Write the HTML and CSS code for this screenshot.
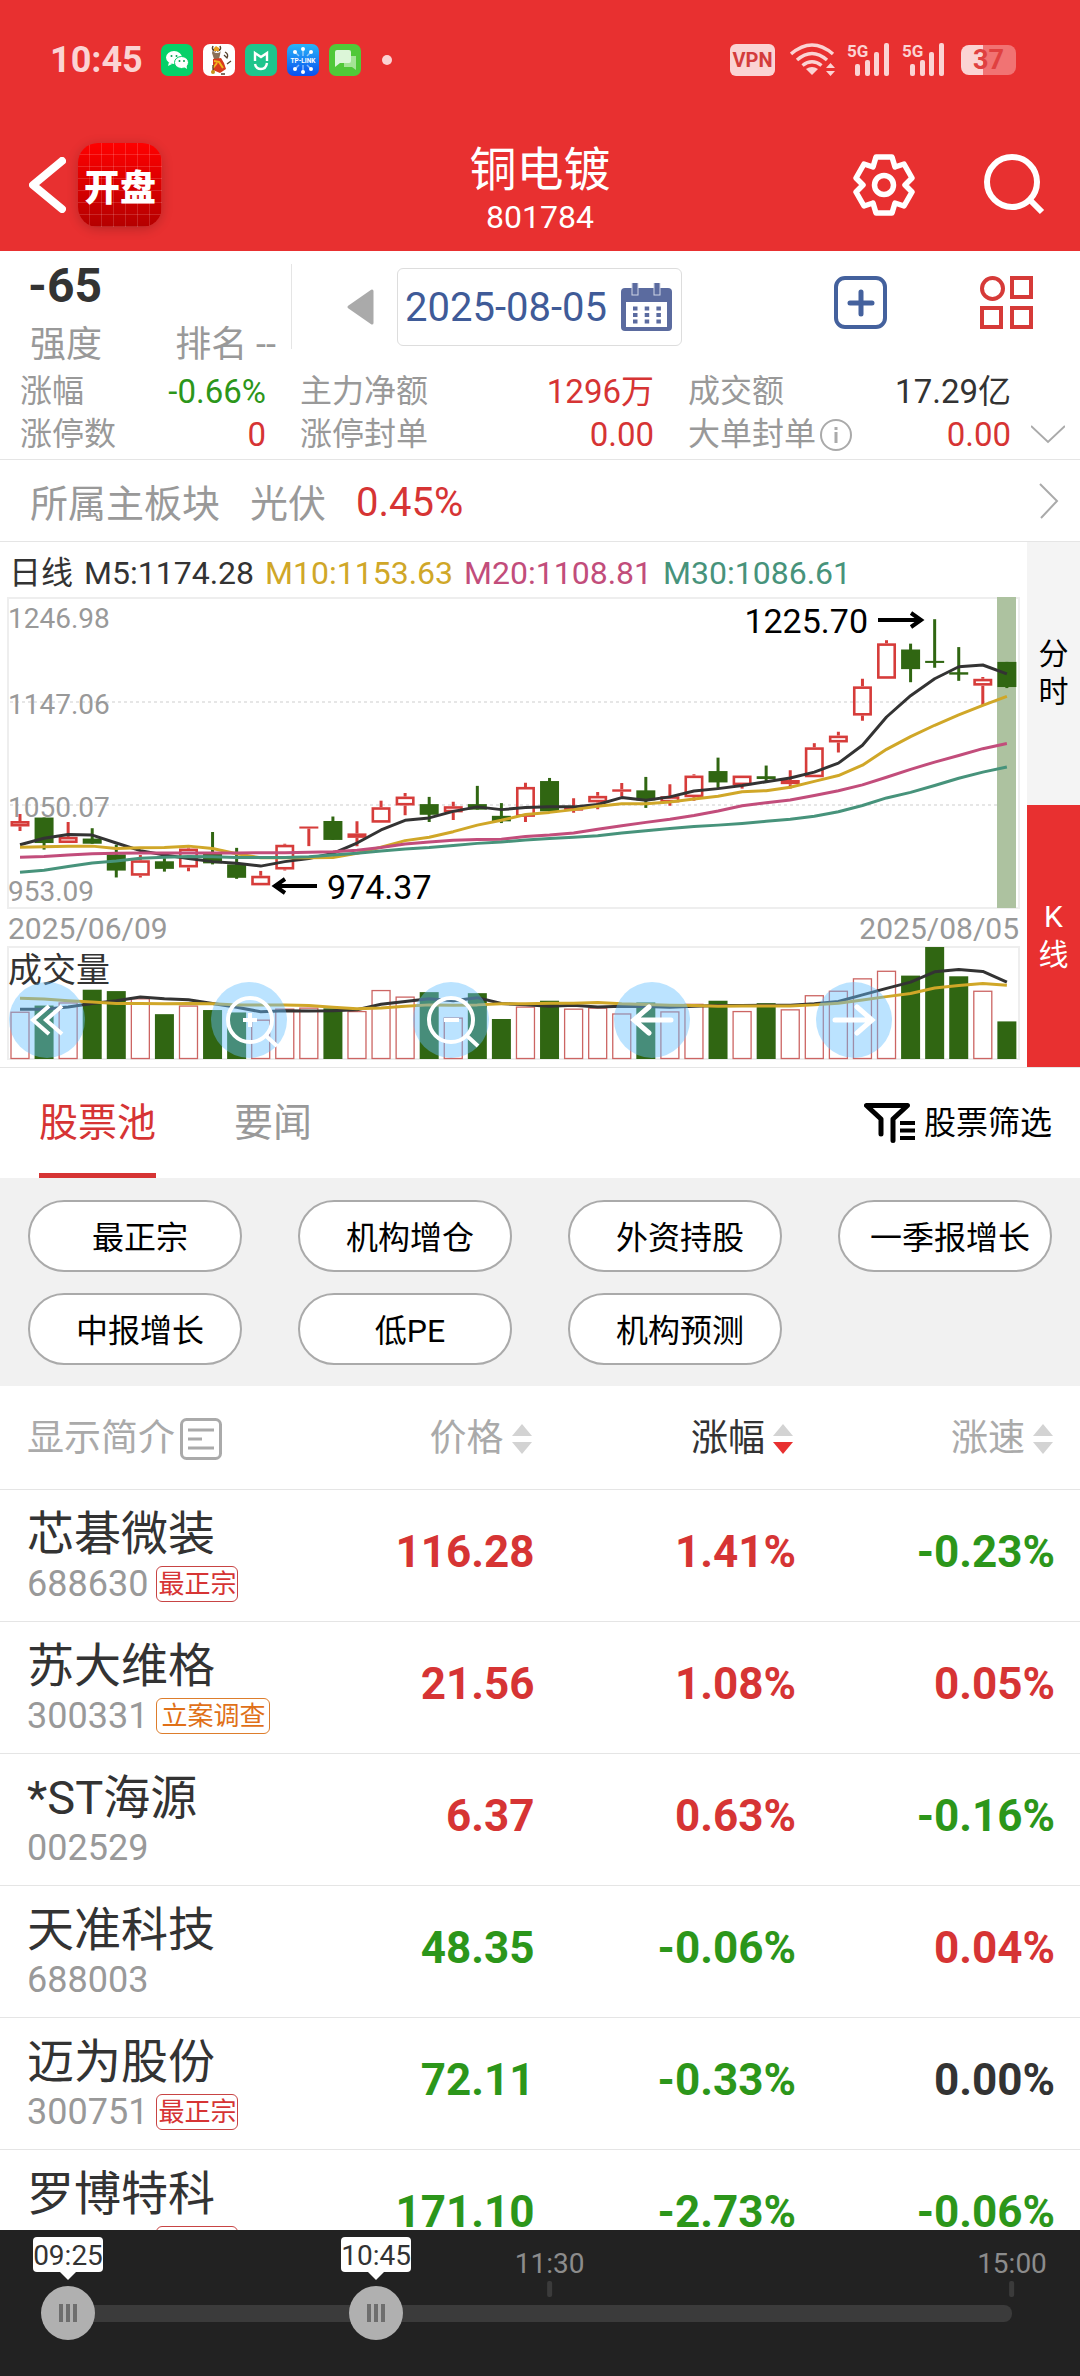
FILE: index.html
```html
<!DOCTYPE html>
<html lang="zh-CN">
<head>
<meta charset="utf-8">
<meta name="viewport" content="width=device-width">
<title>铜电镀 801784</title>
<link rel="stylesheet" href="styles.css">
</head>
<body>
<header class="top">
  <div class="status">
    <span class="clock">10:45</span>
    <svg class="app" viewBox="0 0 32 32"><rect width="32" height="32" rx="7" fill="#06d068"/><ellipse cx="13" cy="13.500" rx="8" ry="6.500" fill="#fff"/><path d="M8 18l-1 4 4-2z" fill="#fff"/><ellipse cx="20.500" cy="18.500" rx="7" ry="6" fill="#fff" stroke="#06d068"/><path d="M23 23l3 2-.5-4z" fill="#fff"/><g fill="#06a050"><circle cx="10.500" cy="12" r="1"/><circle cx="15.500" cy="12" r="1"/><circle cx="18.500" cy="17" r="1"/><circle cx="23" cy="17" r="1"/></g></svg>
    <svg class="app" viewBox="0 0 32 32"><rect width="32" height="32" rx="7" fill="#fff"/><path d="M10 5q0 4 4 4t4-4l-1 6-1 4h-5l-2-6z" fill="#8a7058"/><path d="M10 2q-2 4 3 5M17 2q2 4-3 5" fill="none" stroke="#54402c" stroke-width="1.500"/><path d="M11 4l2-2 3 2v3h-5z" fill="#e8a020"/><path d="M10 15l8-1 3 5 2 6-6 4-7-3z" fill="#d83a1c"/><path d="M11 17l5 1 4 6M10 24l4-5" fill="none" stroke="#f2b51e" stroke-width="2"/><path d="M22 8q4 2 2 6l-3-3M24 20l4-3M10 29V21M18 30h4" fill="none" stroke="#54402c" stroke-width="1.300"/><circle cx="10" cy="28" r="2" fill="#c89018"/></svg>
    <svg class="app" viewBox="0 0 32 32"><rect width="32" height="32" rx="7" fill="#1ec58c"/><path d="M10 17V9l6 4 6-4v8M10 20q1 5 6 5t6-6" fill="none" stroke="#fff" stroke-width="2.400"/></svg>
    <svg class="app" viewBox="0 0 32 32"><defs><linearGradient id="tp" x2="0" y2="1"><stop stop-color="#28b4f8"/><stop offset="1" stop-color="#0850f0"/></linearGradient></defs><rect width="32" height="32" rx="7" fill="url(#tp)"/><g fill="#fff"><circle cx="16" cy="5" r="2"/><circle cx="8" cy="8" r="2"/><circle cx="24" cy="8" r="2"/><circle cx="16" cy="28" r="2"/><circle cx="8" cy="25" r="2"/><circle cx="24" cy="25" r="2"/></g><path d="M16 5v7M8 8l4 4M24 8l-4 4M16 27v-6M8 25l4-4M24 25l-4-4" stroke="#fff" stroke-opacity=".5" stroke-width="1.500"/><text x="16" y="18.500" font-size="6.500" font-weight="700" text-anchor="middle" fill="#fff">TP-LINK</text></svg>
    <svg class="app" viewBox="0 0 32 32"><rect width="32" height="32" rx="7" fill="#50c838"/><path d="M15 12h12v14l-4-3h-8z" fill="#a4e496"/><path d="M8 6h12q2 0 2 2v9q0 2-2 2h-9l-5 4V8q0-2 2-2z" fill="#dcf6d8"/></svg>
    <span class="more"></span>
    <span class="vpn">VPN</span>
    <svg class="wifi" viewBox="0 0 46 33" fill="none" stroke="#fbd3d3" stroke-width="3.500"><path d="M1 11Q22-7 43 11M7 17Q22 4 37 17M12.500 22.500Q22 15 31.500 22.500"/><path d="M16 26q6-4 12 0l-6 6z" fill="#fbd3d3" stroke="none"/><path d="M36 25l4.500-5 4.500 5zM36 28h9l-4.500 5z" fill="#fbd3d3" stroke="none"/></svg>
    <svg class="signal" viewBox="0 0 43 33" fill="#fbd3d3"><text x="0" y="14" font-size="17" font-weight="700">5G</text><rect x="8" y="21" width="5" height="12" rx="2"/><rect x="18" y="17" width="5" height="16" rx="2"/><rect x="27" y="9" width="5" height="24" rx="2"/><rect x="37" y="0" width="5" height="33" rx="2"/></svg>
    <svg class="signal" viewBox="0 0 43 33" fill="#fbd3d3"><text x="0" y="14" font-size="17" font-weight="700">5G</text><rect x="8" y="21" width="5" height="12" rx="2"/><rect x="18" y="17" width="5" height="16" rx="2"/><rect x="27" y="9" width="5" height="24" rx="2"/><rect x="37" y="0" width="5" height="33" rx="2"/></svg>
    <span class="battery">37</span>
  </div>
  <nav class="nav">
    <div class="nav-left">
      <button class="icon-btn" aria-label="返回"><svg width="37" height="56" viewBox="0 0 37 56" fill="none" stroke="#fff" stroke-width="8" stroke-linecap="round" stroke-linejoin="round"><path d="M33 4L4 28l29 24"/></svg></button>
      <span class="logo">开盘</span>
    </div>
    <div class="title"><h1>铜电镀</h1><p>801784</p></div>
    <div class="nav-right">
      <button class="icon-btn" aria-label="设置"><svg width="62" height="62" viewBox="-31 -31 62 62" fill="none" stroke="#fff" stroke-width="5.500" stroke-linejoin="round"><path d="M-8-28H8L11-18 20-21 28-7 21 0 28 7 20 21 11 18 8 28H-8L-11 18-20 21-28 7-21 0-28-7-20-21-11-18z"/><circle r="9.500"/></svg></button>
      <button class="icon-btn" aria-label="搜索"><svg width="62" height="62" viewBox="0 0 62 62" fill="none" stroke="#fff" stroke-width="6"><circle cx="29" cy="28" r="25"/><path d="M47 46l12 12"/></svg></button>
    </div>
  </nav>
</header>

<section class="overview">
  <div class="score"><strong>-65</strong><div class="rank"><span>强度</span><span>排名 --</span></div></div>
  <span class="rule"></span>
  <button class="icon-btn prev" aria-label="前一天"><svg width="27" height="36" viewBox="0 0 27 36"><path d="M25 2v32L2 18z" fill="#aaa" stroke="#aaa" stroke-width="3" stroke-linejoin="round"/></svg></button>
  <button class="date">2025-08-05
    <svg width="51" height="48" viewBox="0 0 51 48"><rect y="5" width="51" height="43" rx="4" fill="#5b6b9f"/><rect x="5" y="19" width="41" height="25" fill="#fff"/><g fill="#5b6b9f" stroke="#cfd5e6"><rect x="11" y="-1" width="6" height="13"/><rect x="33" y="-1" width="6" height="13"/></g><path d="M12 25.500h30M12 32h30M12 38.500h30" stroke="#5b6b9f" stroke-width="4" stroke-dasharray="4.500 7.200"/></svg>
  </button>
  <div class="tools">
    <button class="icon-btn" aria-label="添加自选"><svg width="53" height="53" viewBox="0 0 53 53" fill="none" stroke="#44619d" stroke-width="4"><rect x="2" y="2" width="49" height="49" rx="9"/><path d="M27 16v22M16 27h22" stroke-width="5" stroke-linecap="round"/></svg></button>
    <button class="icon-btn" aria-label="更多功能"><svg width="53" height="53" viewBox="0 0 53 53" fill="none" stroke="#d63a38" stroke-width="4"><circle cx="12.500" cy="12.500" r="10.500"/><rect x="32" y="2" width="19" height="19"/><rect x="2" y="32" width="19" height="19"/><rect x="32" y="32" width="19" height="19"/></svg></button>
  </div>
</section>

<section class="metrics">
  <dl>
    <div><dt>涨幅</dt><dd class="down">-0.66%</dd></div>
    <div><dt>主力净额</dt><dd class="up">1296万</dd></div>
    <div><dt>成交额</dt><dd>17.29亿</dd></div>
    <div><dt>涨停数</dt><dd class="up">0</dd></div>
    <div><dt>涨停封单</dt><dd class="up">0.00</dd></div>
    <div><dt>大单封单<svg width="32" height="32" viewBox="0 0 32 32" fill="none" stroke="#aaa" stroke-width="2"><circle cx="16" cy="16" r="15"/><path d="M16 13v11M16 8v3" stroke-width="3"/></svg></dt><dd class="up">0.00</dd></div>
  </dl>
  <button class="icon-btn expand" aria-label="展开"><svg width="34" height="20" viewBox="0 0 34 20" fill="none" stroke="#aaa" stroke-width="2"><path d="M0 2l17 16L34 2"/></svg></button>
</section>

<a class="board" href="#board"><span>所属主板块</span><span>光伏</span><b>0.45%</b>
  <svg width="22" height="36" viewBox="0 0 22 36" fill="none" stroke="#aaa" stroke-width="2"><path d="M2 1l17 17L3 35"/></svg>
</a>

<section class="chart">
  <div class="plot">
    <div class="legend"><span>日线</span><span>M5:1174.28</span><span class="m10">M10:1153.63</span><span class="m20">M20:1108.81</span><span class="m30">M30:1086.61</span></div>
    <svg id="kline" viewBox="0 0 1027 470" role="img" aria-label="日K线图"></svg>
    <div class="controls">
      <button aria-label="向左翻页"><svg viewBox="0 0 76 76"><path d="M40 24L24 38l16 14M53 24L37 38l16 14"/></svg></button>
      <button aria-label="放大"><svg viewBox="0 0 76 76"><circle cx="39" cy="38" r="22"/><path d="M54 53l12 11M39 31v14M32 38h14"/></svg></button>
      <button aria-label="缩小"><svg viewBox="0 0 76 76"><circle cx="38" cy="38" r="22"/><path d="M53 53l12 11M31 38h15"/></svg></button>
      <button aria-label="左移"><svg viewBox="0 0 76 76"><path class="bold" d="M35 25L20 38l15 13M20 38h37"/></svg></button>
      <button aria-label="右移"><svg viewBox="0 0 76 76"><path class="bold" d="M41 25l15 13-15 13M56 38H19"/></svg></button>
    </div>
  </div>
  <div class="modes"><button>分<br>时</button><button class="on">K<br>线</button></div>
</section>

<nav class="tabs">
  <a class="active" href="#pool">股票池</a><a href="#news">要闻</a>
  <button class="filter"><svg width="51" height="40" viewBox="0 0 51 40" fill="none" stroke="#000" stroke-width="5" stroke-linecap="round" stroke-linejoin="round"><path d="M17 31V16L2.500 2.500h41L29 16v21.500"/><path d="M36 20h15M36 27.500h15M36 35h15" stroke-width="4" stroke-linecap="butt"/></svg>股票筛选</button>
</nav>

<div class="chips">
  <button>最正宗</button><button>机构增仓</button><button>外资持股</button><button>一季报增长</button>
  <button>中报增长</button><button>低PE</button><button>机构预测</button>
</div>

<main class="list">
<table>
  <colgroup><col class="c-name"><col class="c-price"><col class="c-change"><col></colgroup>
  <thead><tr>
    <th><button>显示简介<svg class="doc" width="42" height="42" viewBox="0 0 42 42" fill="none" stroke="#aaa" stroke-width="3"><rect x="1.500" y="1.500" width="39" height="39" rx="5"/><path d="M8 12h26M8 21h14M8 30h26"/></svg></button></th>
    <th><button>价格<svg class="sort" viewBox="0 0 20 30"><path d="M10 0l10 12H0z"/><path d="M0 18h20L10 30z"/></svg></button></th>
    <th><button class="sorted">涨幅<svg class="sort" viewBox="0 0 20 30"><path d="M10 0l10 12H0z"/><path class="desc" d="M0 18h20L10 30z"/></svg></button></th>
    <th><button>涨速<svg class="sort" viewBox="0 0 20 30"><path d="M10 0l10 12H0z"/><path d="M0 18h20L10 30z"/></svg></button></th>
  </tr></thead>
  <tbody>
    <tr><td><div class="name">芯碁微装</div><div class="code">688630<span class="tag">最正宗</span></div></td><td class="up">116.28</td><td class="up">1.41%</td><td class="down">-0.23%</td></tr>
    <tr><td><div class="name">苏大维格</div><div class="code">300331<span class="tag case">立案调查</span></div></td><td class="up">21.56</td><td class="up">1.08%</td><td class="up">0.05%</td></tr>
    <tr><td><div class="name">*ST海源</div><div class="code">002529</div></td><td class="up">6.37</td><td class="up">0.63%</td><td class="down">-0.16%</td></tr>
    <tr><td><div class="name">天准科技</div><div class="code">688003</div></td><td class="down">48.35</td><td class="down">-0.06%</td><td class="up">0.04%</td></tr>
    <tr><td><div class="name">迈为股份</div><div class="code">300751<span class="tag">最正宗</span></div></td><td class="down">72.11</td><td class="down">-0.33%</td><td>0.00%</td></tr>
    <tr><td><div class="name">罗博特科</div><div class="code">300757<span class="tag">最正宗</span></div></td><td class="down">171.10</td><td class="down">-2.73%</td><td class="down">-0.06%</td></tr>
  </tbody>
</table>
</main>

<footer class="timeline">
  <div class="scale">
    <span class="mark" style="left:51.02%">11:30</span>
    <span class="mark" style="left:100%">15:00</span>
    <label class="bubble" for="from" style="left:0%">09:25</label>
    <label class="bubble" for="to" style="left:32.65%">10:45</label>
    <div class="track"></div>
    <input id="from" type="range" min="0" max="245" value="0">
    <input id="to" type="range" min="0" max="245" value="80">
  </div>
</footer>
<script src="chart.js"></script>
</body>
</html>
```
FILE: styles.css
```css
* { box-sizing: border-box; margin: 0; padding: 0; }
body {
  height: 100vh;
  display: flex;
  flex-direction: column;
  overflow: hidden;
  background: #fff;
  color: #333;
  font-family: Roboto, "Noto Sans CJK SC", sans-serif;
  font-size: 32px;
}
body > * { flex: none; }
button { background: none; border: 0; font: inherit; color: inherit; cursor: pointer; }
a { color: inherit; text-decoration: none; }
svg { display: block; flex: none; }
.icon-btn { display: flex; }
.up { color: #d63434; }
.down { color: #2c961a; }

/* header */
.top { background: #e83030; color: #fff; }
.status { display: flex; align-items: center; height: 119px; padding: 0 64px 0 50px; color: #fbd3d3; }
.clock { font-size: 36px; font-weight: 700; width: 111px; }
.app { width: 32px; height: 32px; margin-right: 10px; }
.more { width: 10px; height: 10px; border-radius: 5px; background: currentColor; margin-left: 11px; }
.vpn { margin-left: auto; width: 45px; height: 32px; border-radius: 6px; background: #fbd3d3; color: #d33c3c; font-size: 20px; font-weight: 700; line-height: 33px; text-align: center; }
.wifi { width: 46px; height: 33px; margin: 0 11px 0 15px; }
.signal { width: 43px; height: 33px; margin-right: 12px; overflow: visible; }
.battery { width: 55px; height: 30px; margin-left: 4px; border-radius: 8px; background: linear-gradient(90deg, #fbd3d3 40%, #f17373 40%); color: #e04040; font-size: 27px; font-weight: 700; line-height: 31px; text-align: center; }
.nav { display: grid; grid-template-columns: 1fr auto 1fr; align-items: center; height: 132px; }
.nav-left { display: flex; align-items: center; gap: 12px; padding-left: 29px; }
.logo {
  width: 84px; height: 84px; border-radius: 20px;
  display: flex; align-items: center; justify-content: center;
  font-size: 36px; font-weight: 900;
  background:
    repeating-linear-gradient(90deg, transparent 0 11px, #ffffff26 11px 12px),
    repeating-linear-gradient(transparent 0 11px, #ffffff26 11px 12px),
    linear-gradient(#ff0000, #b40000);
  box-shadow: 0 2px 12px #0003;
}
.title { text-align: center; padding-top: 8px; }
.title h1 { font-size: 47px; font-weight: 400; line-height: 56px; }
.title p { font-size: 32px; line-height: 38px; }
.nav-right { display: flex; justify-content: flex-end; gap: 68px; padding-right: 35px; }

/* score and date */
.overview { display: flex; align-items: center; height: 118px; padding-right: 47px; }
.score { width: 291px; padding: 4px 15px 0 28px; }
.score strong { display: block; font-size: 48px; line-height: 48px; }
.rank { display: flex; justify-content: space-between; margin-top: 17px; font-size: 36px; line-height: 36px; color: #999; padding-left: 2px; }
.rule { width: 1px; height: 85px; background: #e5e5e5; margin-bottom: 8px; }
.prev { margin-left: 55px; margin-bottom: 6px; }
.date { display: flex; align-items: center; gap: 14px; width: 285px; height: 78px; margin: 0 0 6px 23px; padding-left: 7px; border: 1px solid #ddd; border-radius: 6px; color: #3f5b98; font-size: 40px; }
.tools { display: flex; gap: 93px; margin: 0 0 15px auto; }

.metrics { display: flex; align-items: flex-end; padding: 1px 15px 3px 20px; border-bottom: 1px solid #e5e5e5; }
.metrics dl { flex: 1; display: grid; grid-template-columns: 246fr 354fr 323fr; column-gap: 34px; line-height: 43px; }
.metrics dl div { display: flex; justify-content: space-between; }
.metrics dt { display: flex; align-items: center; gap: 4px; color: #999; }
.metrics dd { font-size: 33px; }
.expand { margin: 0 0 12px 20px; }

.board { display: flex; align-items: center; gap: 30px; height: 82px; padding: 0 20px 0 30px; border-bottom: 1px solid #e5e5e5; font-size: 38px; color: #999; }
.board b { padding-top: 4px; font-size: 40px; font-weight: 400; color: #d63434; }
.board svg { margin-left: auto; }

/* chart */
.chart { display: flex; border-bottom: 1px solid #e5e5e5; }
.plot { position: relative; flex: 1; }
.legend { display: flex; gap: 11px; padding: 8px 0 0 9px; line-height: 47px; white-space: nowrap; }
.m10 { color: #d0a728; }
.m20 { color: #c24d7b; }
.m30 { color: #47937b; }
#kline { width: 100%; height: auto; }
#kline .frame { fill: none; stroke: #eee; stroke-width: 2; }
#kline .grid { stroke: #e6e6e6; stroke-width: 2; stroke-dasharray: 3 3; }
#kline .axis { fill: #999; font-size: 28px; }
#kline .day { fill: #999; font-size: 30px; }
#kline .note { fill: #000; font-size: 34px; }
#kline .label { fill: #333; font-size: 34px; }
#kline .arrow { fill: none; stroke: #000; stroke-width: 4; }
#kline .line { fill: none; stroke-width: 3; stroke-linejoin: round; }
.controls { position: absolute; left: 9px; right: 135px; bottom: 9px; display: flex; justify-content: space-between; }
.controls button { width: 76px; height: 76px; border-radius: 38px; background: #64bfff70; }
.controls svg { fill: none; stroke: #fff; stroke-width: 4; }
.controls .bold { stroke-width: 5; stroke-linecap: round; }
.modes { width: 53px; display: flex; flex-direction: column; line-height: 38px; font-size: 30px; }
.modes button { flex: 1; background: #f4f4f4; color: #000; }
.modes .on { background: #e83030; color: #fff; }

/* tabs and chips */
.tabs { display: flex; height: 110px; padding: 0 28px 0 39px; gap: 78px; font-size: 39px; line-height: 111px; color: #999; }
.tabs .active { color: #d63434; border-bottom: 5px solid #d63434; }
.filter { display: flex; align-items: center; gap: 9px; margin-left: auto; font-size: 32px; line-height: 40px; color: #000; }
.chips { display: grid; grid-template-columns: repeat(4, 1fr); gap: 21px 56px; padding: 22px 28px 21px; background: #f1f1f1; }
.chips button { height: 72px; padding: 0 0 2px 10px; border: 2px solid #aaa; border-radius: 36px; background: #fff; color: #000; white-space: nowrap; }

/* stock list */
body > .list { flex: 1 1 0; min-height: 0; overflow: hidden; }
table { width: 100%; table-layout: fixed; border-collapse: collapse; }
.c-name { width: 26%; }
.c-price { width: 23.5%; }
.c-change { width: 24.2%; }
tr { border-bottom: 1px solid #e5e5e5; }
th { height: 103px; font-size: 37px; font-weight: 400; color: #aaa; }
th button { display: flex; align-items: center; gap: 8px; margin: 0 3px 0 auto; padding-top: 4px; line-height: 44px; }
th:first-child button { margin: 0 0 0 27px; gap: 5px; }
th:last-child button { margin-right: 27px; }
.sorted { color: #333; }
.sort { width: 20px; height: 30px; fill: #d3d3d3; }
.sort .desc { fill: #e83030; }
td { height: 132px; text-align: right; font-size: 44px; font-weight: 700; padding-bottom: 6px; }
td:first-child { text-align: left; font-weight: 400; padding: 0 0 0 27px; white-space: nowrap; }
td:last-child { padding-right: 25px; }
.name { font-size: 47px; line-height: 52px; }
.code { display: flex; align-items: center; gap: 8px; height: 38px; margin-top: 5px; font-size: 36px; color: #999; }
.tag { height: 36px; padding: 0 1px; border: 1px solid #c84444; border-radius: 6px; color: #d63434; font-size: 26px; line-height: 34px; }
.tag.case { padding: 0 4px; border-color: #dd7d2c; color: #e07018; }

/* time slider */
.timeline { height: 146px; padding: 0 68px; background: #222; }
.scale { position: relative; height: 100%; }
.mark, .bubble { position: absolute; transform: translateX(-50%); font-size: 28px; text-align: center; }
.mark { top: 17px; line-height: 33px; color: #8c8c8c; }
.mark::after { content: ""; display: block; width: 5px; height: 16px; margin: 1px auto 0; border-radius: 2px; background: #3b3b3b; }
.bubble { top: 7px; width: 70px; height: 35px; border-radius: 4px; background: #fff; color: #333; line-height: 38px; }
.bubble::after { content: ""; position: absolute; left: 27px; top: 35px; border: 8px solid transparent; border-top-color: #fff; border-bottom: 0; }
.track { position: absolute; left: -8px; right: 0; top: 75px; height: 17px; border-radius: 8px; background: #3b3b3b; }
.scale input { position: absolute; left: -27px; top: 56px; width: calc(100% + 54px); height: 54px; appearance: none; background: none; pointer-events: none; }
.scale input::-webkit-slider-thumb {
  appearance: none; width: 54px; height: 54px; border-radius: 50%; pointer-events: auto;
  background:
    linear-gradient(90deg, #6e6e6e 0 4px, transparent 4px 7px, #6e6e6e 7px 11px, transparent 11px 14px, #6e6e6e 14px 18px) center / 18px 18px no-repeat,
    #b0b0b0;
}
```
FILE: chart.js
```js
// Candles: [type, high, open/close top, open/close bottom, low, volume top].
// Heights count down from the top of the legend; py() scales them to the plot.
const candles = [
  ["r",796,816,832,845,1370],["g",806,806,880,899,1352],["r",819,862,880,880,1343],["g",837,867,882,882,1306],
  ["g",885,913,960,980,1310],["r",915,930,975,980,1331],["g",924,933,955,963,1377],["r",893,896,951,962,1352],
  ["g",848,911,939,942,1365],["g",894,942,981,984,1372],["r",961,975,1003,1003,1393],["r",882,885,957,960,1361],
  ["r",832,832,838,889,1358],["g",803,816,871,871,1360],["r",817,852,865,889,1368],["r",757,776,821,821,1307],
  ["r",735,745,771,799,1326],["g",746,767,798,819,1313],["r",760,773,791,813,1387],["g",714,767,783,783,1316],
  ["g",764,801,817,822,1391],["r",705,717,804,819,1355],["g",691,700,788,788,1338],["r",750,778,786,792,1361],
  ["r",732,743,762,782,1358],["r",706,724,731,745,1375],["g",688,727,756,778,1343],["r",709,744,762,772,1369],
  ["r",680,684,747,757,1347],["g",632,671,704,720,1338],["r",684,684,712,722,1368],["g",655,686,694,704,1345],
  ["r",669,697,709,722,1363],["r",590,602,689,689,1322],["r",557,568,588,617,1309],["r",403,425,510,525,1273],
  ["r",291,300,403,403,1251],["g",301,318,375,413,1265],["g",230,351,357,371,1182],["g",311,384,391,409,1267],
  ["r",398,403,423,480,1309],["g",354,354,427,430,1398]
];
const lines = [
  ["#333333",[885,866,855,857,880,902,915,925,934,939,947,934,925,910,880,842,814,807,788,775,783,777,775,775,768,748,756,746,729,722,713,702,691,674,648,596,514,452,403,368,363,389]],
  ["#d0a728",[892,891,889,889,896,894,893,889,896,911,923,923,923,922,910,892,873,863,847,828,814,797,791,783,773,766,766,761,752,744,731,728,718,701,684,654,608,571,538,508,480,454]],
  ["#c24d7b",[921,919,915,911,910,909,909,909,909,909,908,908,907,905,901,893,883,877,872,870,869,861,857,851,840,830,820,811,800,787,772,763,755,742,728,711,689,666,645,626,606,591]],
  ["#47937b",[965,959,948,938,932,924,921,919,920,922,922,922,920,915,910,903,897,893,887,881,877,871,867,863,859,851,844,838,832,828,823,817,811,802,789,771,749,733,713,692,674,659]],
  ["#333333",[1363,1363,1356,1346,1338,1327,1332,1335,1346,1357,1370,1367,1368,1367,1364,1348,1340,1332,1338,1329,1346,1350,1354,1351,1356,1354,1355,1357,1354,1352,1352,1351,1351,1347,1340,1321,1302,1284,1254,1247,1253,1284]],
  ["#d0a728",[1331,1333,1338,1342,1346,1346,1347,1346,1347,1350,1350,1350,1352,1357,1361,1359,1354,1350,1351,1350,1347,1347,1345,1345,1343,1347,1349,1351,1352,1354,1353,1353,1353,1350,1345,1336,1326,1317,1301,1294,1288,1293]]
];
const GREEN = "#306612", RED = "#d63c3a", SCALE = 2.904, BASE = 462;
const px = i => 20 + i * 24.07;
const py = v => v / SCALE - 57;
const text = (cls, x, y, s, anchor = "start") =>
  `<text class="${cls}" x="${x}" y="${y}" text-anchor="${anchor}">${s}</text>`;

let out = `<rect class="frame" x="8" y="1" width="1011" height="310"/>
<rect class="frame" x="8" y="350" width="1011" height="112"/>
<path class="grid" d="M10 105H1018M10 208H1018"/>`;
out += text("axis", 8, 31, "1246.98") + text("axis", 8, 117, "1147.06")
     + text("axis", 8, 220, "1050.07") + text("axis", 8, 304, "953.09")
     + text("day", 8, 342, "2025/06/09") + text("day", 1019, 342, "2025/08/05", "end")
     + text("label", 8, 385, "成交量");
out += `<rect x="997" y="0" width="19" height="311" fill="#adc2a0"/>`;

candles.forEach(([type, high, top, bottom, low, vol], i) => {
  const x = px(i), h = (bottom - top) / SCALE, v = py(vol);
  if (type === "g") {
    out += `<path d="M${x} ${py(high)}V${py(low)}" stroke="${GREEN}" stroke-width="3"/>
<rect x="${x - 9.5}" y="${py(top)}" width="19" height="${h}" fill="${GREEN}"/>
<rect x="${x - 9.5}" y="${v}" width="19" height="${BASE - v}" fill="${GREEN}"/>`;
  } else {
    const body = h > 4
      ? `<rect x="${x - 8.2}" y="${py(top) + 1.3}" width="16.4" height="${Math.max(h - 2.6, 1)}" fill="none" stroke="${RED}" stroke-width="2.6"/>`
      : `<rect x="${x - 9.5}" y="${py(top)}" width="19" height="${h}" fill="${RED}"/>`;
    out += `<path d="M${x} ${py(high)}V${py(top)}M${x} ${py(bottom)}V${py(low)}" stroke="${RED}" stroke-width="3"/>${body}
<rect x="${x - 9}" y="${v + .5}" width="18" height="${BASE - 1 - v}" fill="none" stroke="#cc6563" stroke-width="1.3"/>`;
  }
});
lines.forEach(([color, ys]) => {
  out += `<polyline class="line" stroke="${color}" points="${ys.map((y, i) => `${px(i)},${py(y)}`).join(" ")}"/>`;
});
out += text("note", 868, 36, "1225.70", "end")
     + `<path class="arrow" d="M878 23H920M911 16L921 23L911 30"/>`
     + text("note", 327, 302, "974.37")
     + `<path class="arrow" d="M317 289H276M285 282L275 289L285 296"/>`;
document.getElementById("kline").innerHTML = out;
```
